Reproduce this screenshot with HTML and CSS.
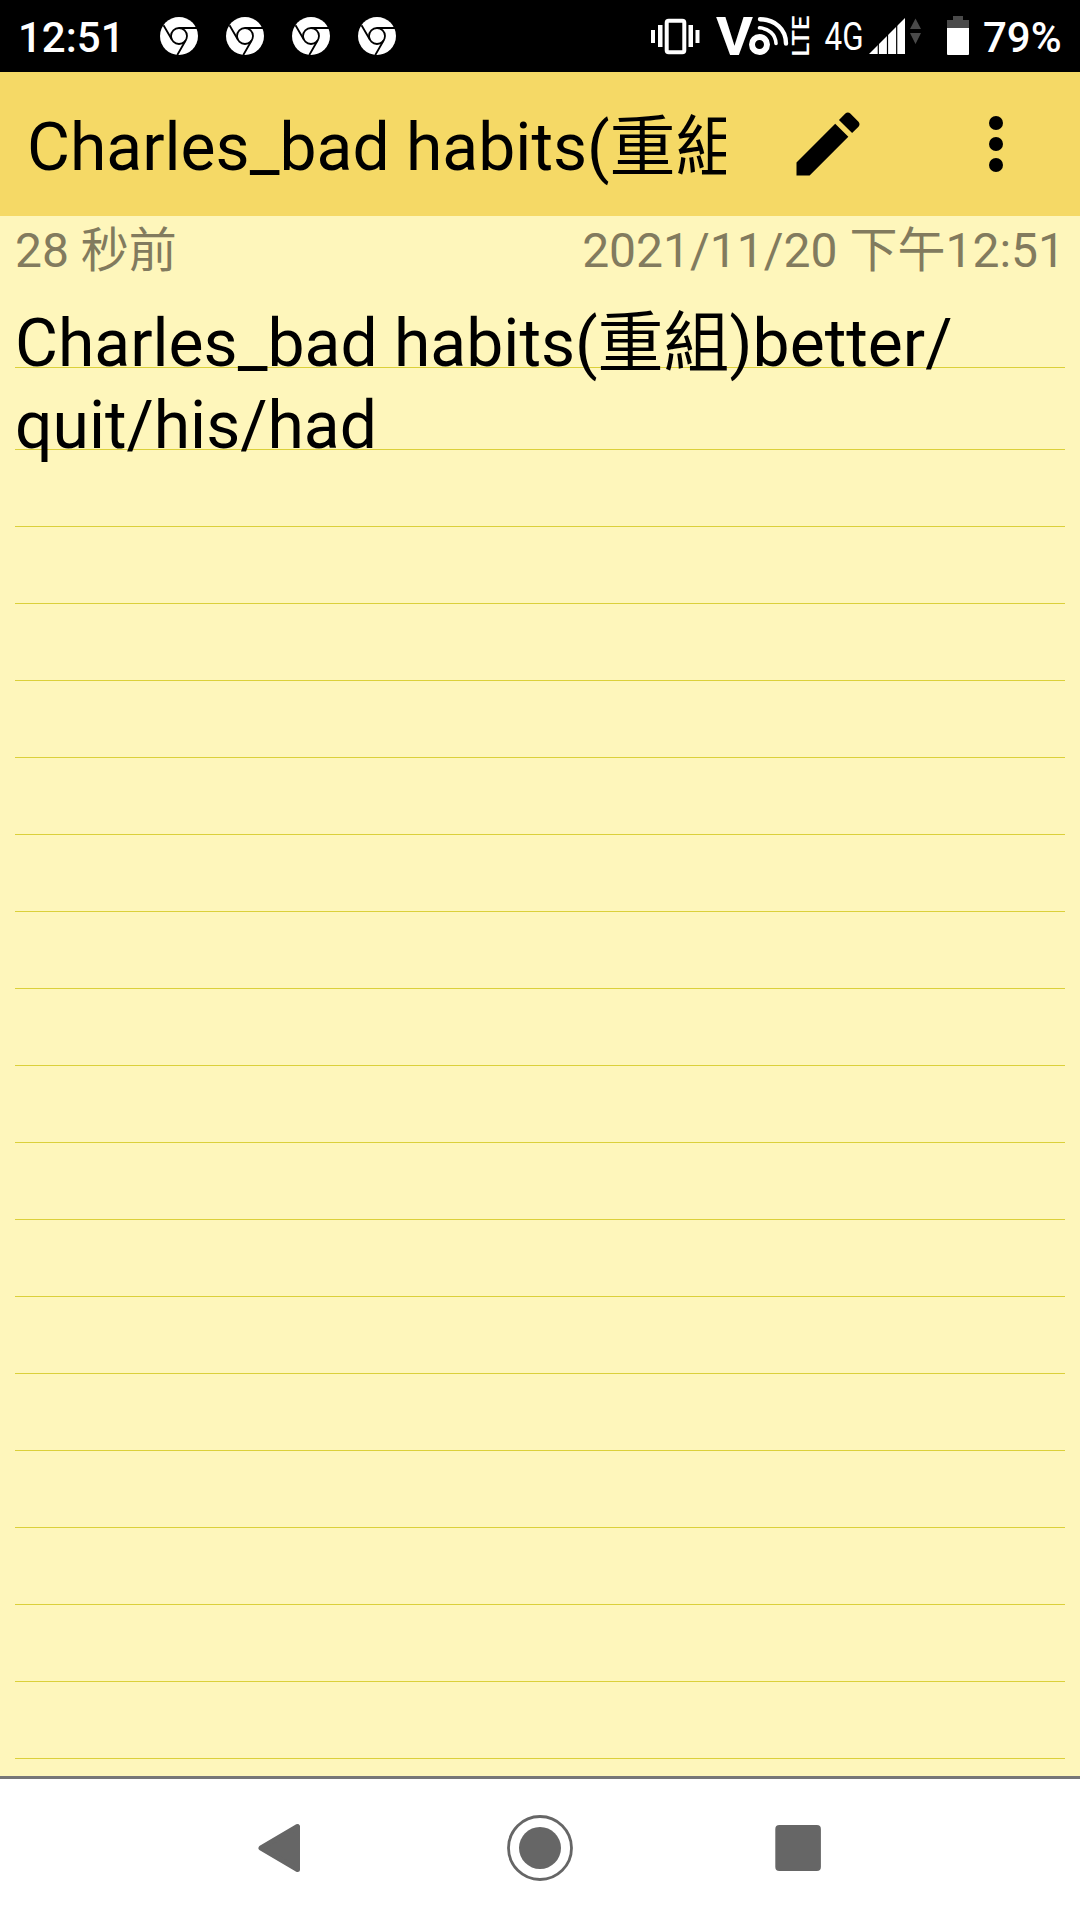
FILE: index.html
```html
<!DOCTYPE html>
<html lang="zh-Hant">
    <head>
        <meta charset="UTF-8" />
        <meta name="viewport" content="width=device-width, initial-scale=1.0" />
        <title>Charles_bad habits(重組)</title>
        <link rel="stylesheet" href="styles.css">
    </head>
    <body>
        <!-- chrome notification icon -->
        <svg class="defs" width="0" height="0">
            <symbol id="chrome" viewBox="0 0 38 38">
                <circle cx="19" cy="19" r="19" fill="#fff" />
                <g fill="none" stroke="#000" stroke-width="1.8">
                    <circle cx="19" cy="19" r="8" />
                    <path d="M19 11H37M12.1 23L3.5 8.2M25.9 23L17.3 38" />
                </g>
            </symbol>
        </svg>

        <!-- status bar -->
        <div class="status">
            <span class="clock">12:51</span>
            <div class="notis">
                <svg class="noti"><use href="#chrome" /></svg>
                <svg class="noti"><use href="#chrome" /></svg>
                <svg class="noti"><use href="#chrome" /></svg>
                <svg class="noti"><use href="#chrome" /></svg>
            </div>
            <svg class="sys" width="429" height="72" viewBox="651 0 429 72">
                <!-- vibrate -->
                <g fill="#fff">
                    <rect x="651" y="30" width="4" height="13" />
                    <rect x="658" y="25" width="4.5" height="22" />
                    <rect x="688.5" y="25" width="4.5" height="22" />
                    <rect x="695.5" y="30" width="4" height="13" />
                </g>
                <rect x="666.7" y="20.7" width="17.6" height="31.6" rx="2" fill="none" stroke="#fff" stroke-width="4" />
                <!-- VoLTE -->
                <text class="volte" x="716" y="55" textLength="37" lengthAdjust="spacingAndGlyphs">V</text>
                <circle cx="759.5" cy="44.5" r="7.5" fill="none" stroke="#fff" stroke-width="6" />
                <g fill="none" stroke="#fff" stroke-linecap="round">
                    <path d="M760 19.2C775 19.5 786 29 786 43.5" stroke-width="4.4" />
                    <path d="M759.5 27.8C768.5 28.5 775.5 34 776 43.5" stroke-width="3.6" />
                </g>
                <text class="lte" transform="translate(809 56.5) rotate(-90)" textLength="41" lengthAdjust="spacingAndGlyphs">LTE</text>
                <!-- network -->
                <text class="net" x="824.5" y="49.5" textLength="39" lengthAdjust="spacingAndGlyphs">4G</text>
                <path d="M869 54L905 18V54Z" fill="#fff" />
                <path d="M878.3 40V54M887.5 30V54M896.7 20V54" stroke="#000" stroke-width="1.2" />
                <path d="M915.5 18.5L921 29H910ZM915.5 44L921 33H910Z" fill="#4a4a4a" />
                <!-- battery -->
                <path d="M953 16H963V20H969V28H947V20H953Z" fill="#4a4a4a" />
                <path d="M947 28H969V54a1 1 0 0 1-1 1H948a1 1 0 0 1-1-1Z" fill="#fff" />
                <text class="pct" x="983" y="52">79%</text>
            </svg>
        </div>

        <!-- title bar -->
        <div class="bar">
            <h1 class="tit">Charles_bad habits(重組)</h1>
            <svg class="edit" width="84" height="84" viewBox="0 0 24 24">
                <path d="M3 17.25V21h3.75L17.81 9.94l-3.75-3.75L3 17.25zM20.71 7.04c.39-.39.39-1.02 0-1.41l-2.34-2.34c-.39-.39-1.02-.39-1.41 0l-1.83 1.83 3.75 3.75 1.83-1.83z" />
            </svg>
            <svg class="more" width="84" height="84" viewBox="0 0 24 24">
                <circle cx="12" cy="6" r="2" />
                <circle cx="12" cy="12" r="2" />
                <circle cx="12" cy="18" r="2" />
            </svg>
        </div>

        <!-- note -->
        <div class="note">
            <div class="info">
                <span>28 秒前</span>
                <span>2021/11/20 下午12:51</span>
            </div>
            <div class="line txt">Charles_bad habits(重組)better/</div>
            <div class="line txt">quit/his/had</div>
            <div class="line"></div>
            <div class="line"></div>
            <div class="line"></div>
            <div class="line"></div>
            <div class="line"></div>
            <div class="line"></div>
            <div class="line"></div>
            <div class="line"></div>
            <div class="line"></div>
            <div class="line"></div>
            <div class="line"></div>
            <div class="line"></div>
            <div class="line"></div>
            <div class="line"></div>
            <div class="line"></div>
            <div class="line"></div>
            <div class="line"></div>
        </div>

        <!-- navigation bar -->
        <div class="nav">
            <svg width="66" height="66" viewBox="0 0 66 66">
                <path d="M13 33L49.5 11.5V54.5Z" fill="#666" stroke="#666" stroke-width="5" stroke-linejoin="round" />
            </svg>
            <svg width="66" height="66" viewBox="0 0 66 66">
                <circle cx="33" cy="33" r="31.5" fill="none" stroke="#666" stroke-width="2.8" />
                <circle cx="33" cy="33" r="21" fill="#666" />
            </svg>
            <svg width="66" height="66" viewBox="0 0 66 66">
                <rect x="9.3" y="10" width="45.6" height="46" rx="4" fill="#666" />
            </svg>
        </div>
    </body>
</html>
```
FILE: styles.css
```css
* {
    box-sizing: border-box;
}
body {
    margin: 0;
    height: 1920px;
    display: flex;
    flex-direction: column;
    overflow: hidden;
    font-family: Roboto, "Noto Sans CJK TC", sans-serif;
    background: #fff;
}
svg {
    display: block;
    flex: none;
}
.defs {
    position: absolute;
}
/* status bar */
.status {
    flex: none;
    height: 72px;
    padding-left: 18px;
    display: flex;
    align-items: center;
    background: #000;
    color: #fff;
}
.clock {
    width: 142px;
    font-size: 42px;
    font-weight: 500;
    line-height: 72px;
    padding-top: 3px;
}
.notis {
    display: flex;
    gap: 28px;
}
.noti {
    width: 38px;
    height: 38px;
}
.sys {
    margin-left: auto;
}
.sys text {
    fill: #fff;
}
.volte {
    font-size: 53px;
    font-weight: 700;
}
.lte {
    font-size: 24px;
    font-weight: 500;
}
.net {
    font-size: 38px;
}
.pct {
    font-size: 42px;
    font-weight: 500;
}
/* title bar */
.bar {
    flex: none;
    height: 144px;
    padding: 0 42px 0 27px;
    display: flex;
    align-items: center;
    background: #f5d966;
}
.tit {
    width: 699px;
    margin: 0;
    padding-top: 7px;
    overflow: hidden;
    white-space: nowrap;
    font-size: 66px;
    font-weight: 400;
    line-height: 144px;
}
.edit {
    margin-left: 60px;
}
.more {
    margin-left: auto;
}
/* note paper */
.note {
    height: 1560px;
    padding: 0 15px;
    background: #fef6bb;
}
.info {
    height: 70px;
    display: flex;
    justify-content: space-between;
    font-size: 48px;
    line-height: 70px;
    color: #827b5e;
}
.line {
    height: 77px;
    border-bottom: 1px solid #dbd03a;
}
.txt {
    height: 82px;
    font-size: 66px;
    line-height: 115px;
    white-space: nowrap;
}
/* navigation bar */
.nav {
    flex: none;
    height: 144px;
    padding: 0 248px 3px;
    display: flex;
    align-items: center;
    justify-content: space-between;
    border-top: 3px solid #777;
    background: #fff;
}
```
